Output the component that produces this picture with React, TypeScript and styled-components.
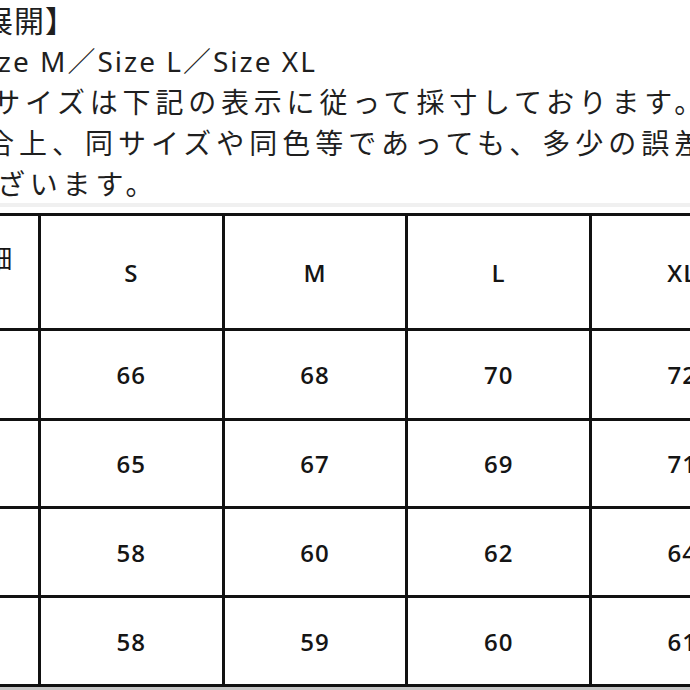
import styled, { createGlobalStyle } from "styled-components";

const GlobalStyle = createGlobalStyle`
  html, body {
    margin: 0;
    padding: 0;
    background: #fff;
  }
`;

const Page = styled.div`
  width: 690px;
  height: 690px;
  overflow: hidden;
  background: #fff;
  display: flex;
  flex-direction: column;
  font-family: "Noto Sans", "Noto Sans CJK JP", sans-serif;
  color: #1f1f1f;
`;

const Notes = styled.div`
  display: flex;
  flex-direction: column;
`;

const Line = styled.div<{ $shift: number; $size?: number; $spacing?: number }>`
  margin-left: ${(p) => p.$shift}px;
  white-space: nowrap;
  font-size: ${(p) => p.$size ?? 28}px;
  letter-spacing: ${(p) => p.$spacing ?? 4.8}px;
  line-height: 41px;
`;

const Divider = styled.div`
  height: 4px;
  margin-top: -2px;
  background: #f0f0f0;
`;

const Grid = styled.div`
  display: grid;
  grid-template-columns: repeat(5, 180.67px);
  grid-template-rows: 112px 87px 85px 86px 86px;
  gap: 3px;
  padding: 3px;
  margin-top: 6px;
  margin-left: -145.67px;
  width: max-content;
  background: #111;
`;

const Cell = styled.div`
  background: #fff;
  display: flex;
  align-items: center;
  justify-content: center;
  font-family: "Open Sans", "Noto Sans", sans-serif;
  font-weight: 600;
  font-size: 24px;
  letter-spacing: 1px;
  color: #151515;
`;

const LabelCell = styled(Cell)`
  flex-direction: column;
  font-family: "Noto Sans CJK JP", sans-serif;
  font-weight: 400;
  font-size: 26px;
  letter-spacing: 0;
  line-height: 31px;
`;

const Bottom = styled.div`
  flex: 1;
  background: #c4c4c4;
`;

const sizes = ["S", "M", "L", "XL"];

const rows = [
  { label: "着丈", values: [66, 68, 70, 72] },
  { label: "身幅", values: [65, 67, 69, 71] },
  { label: "肩幅", values: [58, 60, 62, 64] },
  { label: "袖丈", values: [58, 59, 60, 61] },
];

const App = () => {
  return (
    <>
      <GlobalStyle />
      <Page>
        <Notes>
          <Line $shift={-140} $size={30} $spacing={1}>
            【サイズ展開】
          </Line>
          <Line $shift={-145} $size={28} $spacing={2}>
            Size S／Size M／Size L／Size XL
          </Line>
          <Line $shift={-36}>※サイズは下記の表示に従って採寸しております。</Line>
          <Line $shift={-47} $spacing={5}>
            都合上、同サイズや同色等であっても、多少の誤差がご
          </Line>
          <Line $shift={-3}>ざいます。</Line>
        </Notes>
        <Divider />
        <Grid>
          <LabelCell>
            <span>サイズ詳細</span>
            <span>(cm)</span>
          </LabelCell>
          {sizes.map((s) => (
            <Cell key={s}>{s}</Cell>
          ))}
          {rows.map((r) => (
            <>
              <LabelCell key={r.label}>{r.label}</LabelCell>
              {r.values.map((v, i) => (
                <Cell key={r.label + i}>{v}</Cell>
              ))}
            </>
          ))}
        </Grid>
        <Bottom />
      </Page>
    </>
  );
};

export default App;
